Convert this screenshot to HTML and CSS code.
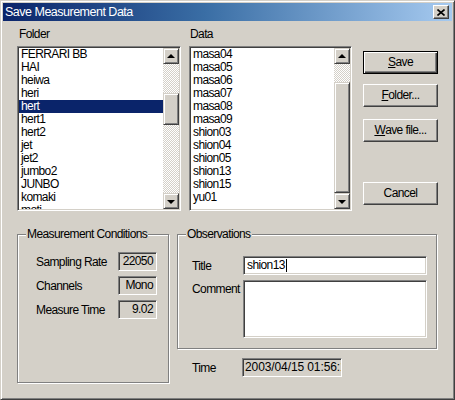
FILE: index.html
```html
<!DOCTYPE html>
<html>
<head>
<meta charset="utf-8">
<link rel="stylesheet" href="styles.css">
</head>
<body>
<div class="window">
  <div class="titlebar">
    <span class="title">Save Measurement Data</span>
    <div class="close">
      <svg width="8" height="7" viewBox="0 0 8 7"><path d="M0.5 0.5 L7.5 6.5 M7.5 0.5 L0.5 6.5" stroke="#000" stroke-width="1.6" fill="none"/></svg>
    </div>
  </div>
  <div class="content">
    <div class="top">
      <div class="folder">
        <div class="label">Folder</div>
        <div class="listbox sunken">
          <ul class="items">
            <li>FERRARI BB</li>
            <li>HAI</li>
            <li>heiwa</li>
            <li>heri</li>
            <li class="sel">hert</li>
            <li>hert1</li>
            <li>hert2</li>
            <li>jet</li>
            <li>jet2</li>
            <li>jumbo2</li>
            <li>JUNBO</li>
            <li>komaki</li>
            <li>moti</li>
          </ul>
          <div class="scrollbar">
            <div class="sbtn"><span class="arrow-up"></span></div>
            <div class="track"><div class="thumb thumb-folder"></div></div>
            <div class="sbtn"><span class="arrow-down"></span></div>
          </div>
        </div>
      </div>
      <div class="data">
        <div class="label">Data</div>
        <div class="listbox sunken">
          <ul class="items">
            <li>masa04</li>
            <li>masa05</li>
            <li>masa06</li>
            <li>masa07</li>
            <li>masa08</li>
            <li>masa09</li>
            <li>shion03</li>
            <li>shion04</li>
            <li>shion05</li>
            <li>shion13</li>
            <li>shion15</li>
            <li>yu01</li>
          </ul>
          <div class="scrollbar">
            <div class="sbtn"><span class="arrow-up"></span></div>
            <div class="track"><div class="thumb thumb-data"></div></div>
            <div class="sbtn"><span class="arrow-down"></span></div>
          </div>
        </div>
      </div>
      <div class="buttons">
        <div class="btn default"><u>S</u>ave</div>
        <div class="btn btn-folder"><u>F</u>older...</div>
        <div class="btn btn-wave"><u>W</u>ave file...</div>
        <div class="btn btn-cancel">Cancel</div>
      </div>
    </div>
    <div class="bottom">
      <div class="group cond">
        <div class="group-title">Measurement Conditions</div>
        <div class="cond-grid">
          <div class="flabel">Sampling Rate</div>
          <div class="field sunken ro">22050</div>
          <div class="flabel">Channels</div>
          <div class="field sunken ro">Mono</div>
          <div class="flabel">Measure Time</div>
          <div class="field sunken ro">9.02</div>
        </div>
      </div>
      <div class="obs-col">
        <div class="group obs">
          <div class="group-title">Observations</div>
          <div class="obs-grid">
            <div class="flabel">Title</div>
            <div class="input sunken">shion13<span class="caret"></span></div>
            <div class="flabel comment-label">Comment</div>
            <div class="textarea sunken"></div>
          </div>
        </div>
        <div class="time-row">
          <div class="flabel">Time</div>
          <div class="timefield sunken">2003/04/15 01:56:19</div>
        </div>
      </div>
    </div>
  </div>
</div>
</body>
</html>
```
FILE: styles.css
```css
* { box-sizing: border-box; }
body {
  margin: 0;
  font-family: "Liberation Sans", Arial, sans-serif;
  font-size: 12px;
  letter-spacing: -0.6px;
  color: #000;
}
.window {
  width: 455px;
  height: 400px;
  background: #d4d0c8;
  border: 1px solid;
  border-color: #d4d0c8 #404040 #404040 #d4d0c8;
  box-shadow: inset 1px 1px #fff, inset -1px -1px #808080;
  padding: 2px;
  display: flex;
  flex-direction: column;
}
.titlebar {
  height: 18px;
  background: linear-gradient(90deg, #0a246a 0%, #3a6ea5 45%, #a6caf0 100%);
  display: flex;
  align-items: center;
  justify-content: space-between;
  padding-left: 2px;
  padding-right: 3px;
  color: #fff;
}
.title { line-height: 14px; font-size: 12.5px; letter-spacing: -0.5px; }
.close {
  width: 16px;
  height: 14px;
  background: #d4d0c8;
  border: 1px solid;
  border-color: #fff #404040 #404040 #fff;
  box-shadow: inset -1px -1px #808080;
  display: flex;
  align-items: center;
  justify-content: center;
}
.content {
  flex: 1;
  padding-left: 14px;
}
.top { display: flex; margin-top: 6px; }
.folder { width: 164px; }
.data { width: 163px; margin-left: 8px; }
.label { height: 19px; line-height: 14px; padding-left: 2px; }
.data .label { padding-left: 1px; }
.sunken {
  border: 1px solid;
  border-color: #808080 #fff #fff #808080;
  box-shadow: inset 1px 1px #404040, inset -1px -1px #d4d0c8;
  padding: 1px;
}
.listbox {
  height: 165px;
  background: #fff;
  display: flex;
  overflow: hidden;
}
.items {
  list-style: none;
  margin: 0;
  padding: 0;
  flex: 1;
  overflow: hidden;
}
.items li {
  height: 13px;
  line-height: 13px;
  padding-left: 2px;
  white-space: nowrap;
}
.items li.sel { background: #0a246a; color: #fff; }
.scrollbar {
  width: 16px;
  display: flex;
  flex-direction: column;
}
.sbtn, .thumb {
  background: #d4d0c8;
  border: 1px solid;
  border-color: #d4d0c8 #404040 #404040 #d4d0c8;
  box-shadow: inset 1px 1px #fff, inset -1px -1px #808080;
}
.sbtn {
  height: 16px;
  display: flex;
  align-items: center;
  justify-content: center;
}
.arrow-up, .arrow-down {
  width: 0; height: 0;
  border-left: 4px solid transparent;
  border-right: 4px solid transparent;
}
.arrow-up { border-bottom: 4px solid #000; margin-top: -1px; }
.arrow-down { border-top: 4px solid #000; margin-top: 1px; }
.track {
  flex: 1;
  background: repeating-conic-gradient(#fff 0 25%, #d4d0c8 0 50%) 0 0 / 2px 2px;
}
.thumb-folder { margin-top: 29px; height: 32px; }
.thumb-data { margin-top: 18px; height: 111px; }
.buttons {
  margin-left: 11px;
  padding-top: 24px;
  display: flex;
  flex-direction: column;
}
.btn {
  width: 75px;
  height: 23px;
  background: #d4d0c8;
  border: 1px solid;
  border-color: #fff #404040 #404040 #fff;
  box-shadow: inset -1px -1px #808080;
  display: flex;
  align-items: center;
  justify-content: center;
  padding-bottom: 1px;
}
.btn.default {
  border-color: #000;
  box-shadow: inset 1px 1px #fff, inset -1px -1px #404040, inset -2px -2px #808080;
}
.btn-folder { margin-top: 10px; }
.btn-wave { margin-top: 12px; }
.btn-cancel { margin-top: 40px; }
.bottom {
  display: flex;
  align-items: flex-start;
  margin-top: 23px;
}
.group {
  border: 1px solid #808080;
  box-shadow: inset 1px 1px #fff, 1px 1px #fff;
}
.group-title {
  width: max-content;
  margin: -8px 0 0 8px;
  padding: 0 1px;
  height: 14px;
  line-height: 14px;
  background: #d4d0c8;
}
.cond { width: 152px; height: 149px; }
.cond-grid {
  display: grid;
  grid-template-columns: 82px 39px;
  grid-auto-rows: 19px;
  row-gap: 5px;
  align-items: center;
  margin-top: 11px;
  padding-left: 18px;
}
.flabel { line-height: 14px; white-space: nowrap; }
.field {
  height: 19px;
  line-height: 15px;
  text-align: right;
  padding-right: 3px;
}
.obs-col { margin-left: 8px; width: 260px; }
.obs { height: 115px; }
.obs-grid {
  display: grid;
  grid-template-columns: 51px 184px;
  grid-template-rows: 19px 58px;
  row-gap: 5px;
  align-items: center;
  margin-top: 15px;
  padding-left: 14px;
}
.comment-label { align-self: start; padding-top: 2px; }
.input, .textarea { background: #fff; height: 100%; }
.input { line-height: 15px; padding-left: 3px; display: flex; align-items: center; }
.caret { display: inline-block; width: 1px; height: 13px; background: #000; margin-left: 1px; }
.time-row {
  display: grid;
  grid-template-columns: 50px 100px;
  align-items: center;
  margin-top: 9px;
  padding-left: 15px;
}
.timefield {
  height: 19px;
  line-height: 15px;
  padding-left: 2px;
  letter-spacing: -0.1px;
  white-space: nowrap;
  overflow: hidden;
}
```
